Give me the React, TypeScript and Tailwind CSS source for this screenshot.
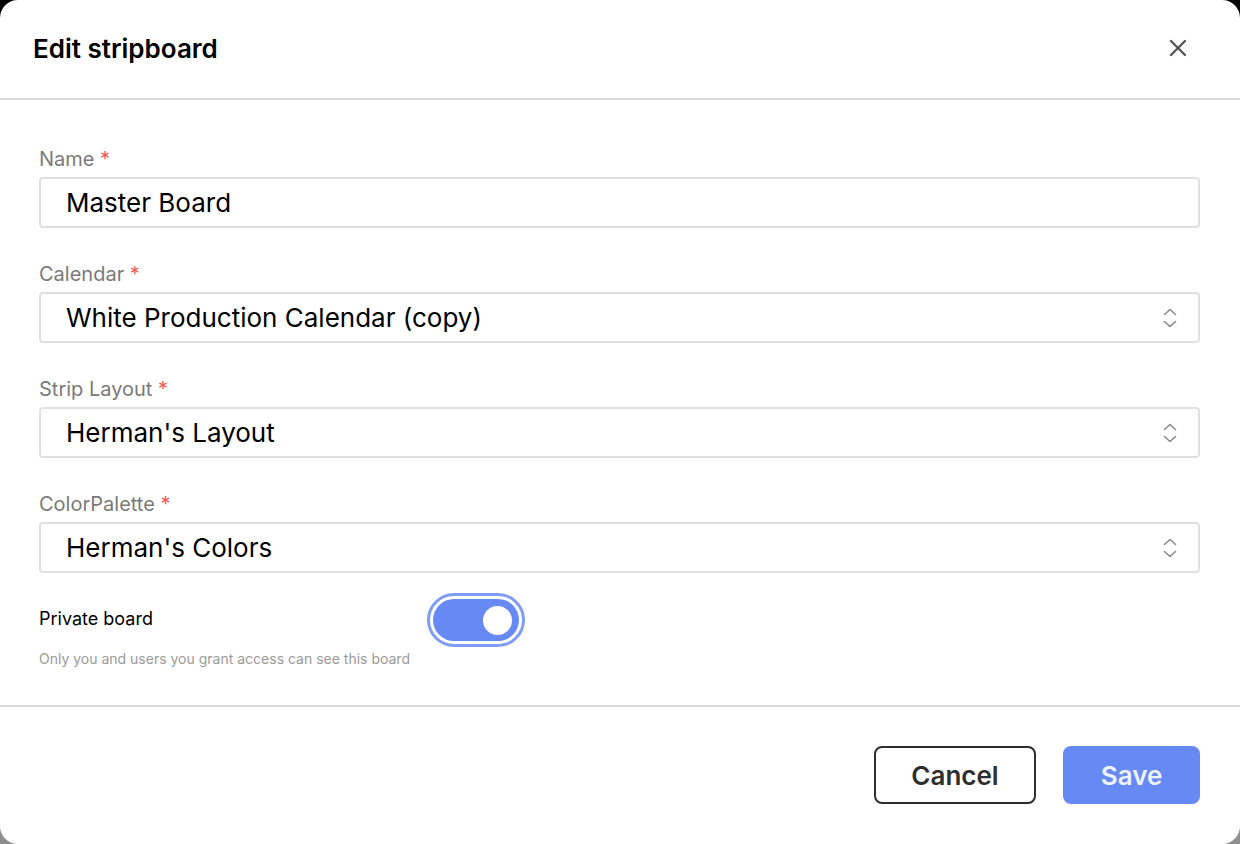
import { X } from "lucide-react";

const Chevrons = () => (
  <svg width="16" height="24" viewBox="0 0 16 24" fill="none" stroke="#8a8a8a" strokeWidth="1.6" strokeLinecap="round" strokeLinejoin="round">
    <path d="M2.5 8.5 L8 3.5 L13.5 8.5" />
    <path d="M2.5 15.5 L8 20.5 L13.5 15.5" />
  </svg>
);

const Field = ({ label, value, select }: { label: string; value: string; select?: boolean }) => {
  return (
    <div className="flex flex-col">
      <label className="h-[24px] leading-[24px] text-[20px] text-[#7a7a7a]">
        {label} <span className="text-[#ef5a5a]">*</span>
      </label>
      <div className="mt-[6px] h-[51px] border-2 border-[#e0e0e0] rounded-[4px] flex items-center justify-between pl-[25px] pr-[20px]">
        <span className="text-[26px] text-black">{value}</span>
        {select && <Chevrons />}
      </div>
    </div>
  );
};

export default function App() {
  return (
    <div className="w-[1240px] h-[844px] bg-gradient-to-b from-[#000] to-[#8f8f8f]" style={{ fontFamily: "Inter, 'Noto Sans', sans-serif" }}>
      <div className="w-full h-full bg-white rounded-[18px] flex flex-col overflow-hidden">
        {/* header */}
        <div className="h-[100px] shrink-0 border-b-2 border-[#dadada] flex items-center justify-between pl-[33px] pr-[48px] pb-[2px]">
          <h2 className="text-[26px] font-semibold text-black">Edit stripboard</h2>
          <X size={28} strokeWidth={2} className="text-[#555]" />
        </div>

        {/* body */}
        <div className="pt-[47px] pl-[39px] pr-[40px] pb-[36px] flex flex-col border-b-2 border-[#dadada]">
          <div className="flex flex-col gap-[34px]">
            <Field label="Name" value="Master Board" />
            <Field label="Calendar" value="White Production Calendar (copy)" select />
            <Field label="Strip Layout" value="Herman's Layout" select />
            <Field label="ColorPalette" value="Herman's Colors" select />
          </div>

          <div className="mt-[20px] flex items-center">
            <span className="w-[388px] text-[18px] leading-[24px] pb-[2px] text-black">Private board</span>
            <div className="w-[98px] h-[54px] rounded-full border-[3px] border-[#7f9cf6] p-[3px]">
              <div className="w-full h-full rounded-full bg-[#6689f4] flex items-center justify-end pr-[7px]">
                <div className="w-[29px] h-[29px] rounded-full bg-white" />
              </div>
            </div>
          </div>
          <p className="mt-[1px] text-[14px] text-[#9a9a9a]">Only you and users you grant access can see this board</p>
        </div>

        {/* footer */}
        <div className="flex justify-end gap-[27px] pt-[39px] pr-[40px]">
          <button className="w-[162px] h-[58px] rounded-[8px] border-2 border-[#2e2e2e] text-[26px] font-semibold text-[#2e2e2e]">
            Cancel
          </button>
          <button className="w-[137px] h-[58px] rounded-[8px] bg-[#6689f4] text-[26px] font-semibold text-[#eef2ff]">
            Save
          </button>
        </div>
      </div>
    </div>
  );
}
